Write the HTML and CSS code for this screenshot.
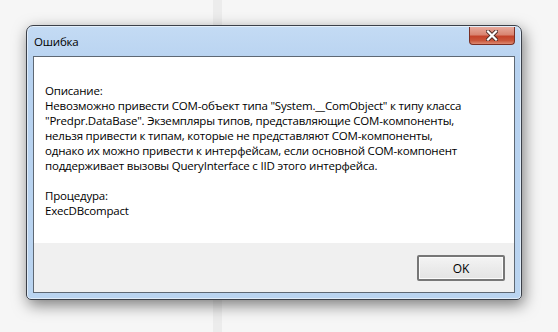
FILE: index.html
```html
<!DOCTYPE html>
<html lang="ru">
<head>
    <meta charset="UTF-8">
    <title>Ошибка</title>
    <link rel="stylesheet" href="styles.css">
</head>
<body>
    <div class="window">
        <div class="titlebar">
            <span class="title">Ошибка</span>
            <button class="close" type="button" aria-label="Закрыть">
                <svg width="12" height="11" viewBox="0 0 12 11">
                    <path d="M2 1.5 L10 9.5 M10 1.5 L2 9.5" stroke="#4a2a25" stroke-width="4" stroke-linecap="square"/>
                    <path d="M2 1.5 L10 9.5 M10 1.5 L2 9.5" stroke="#ffffff" stroke-width="2.2" stroke-linecap="square"/>
                </svg>
            </button>
        </div>
        <div class="client">
            <div class="message">
                <p>Описание:<br>
                Невозможно привести COM-объект типа "System.__ComObject" к типу класса<br>
                "Predpr.DataBase". Экземпляры типов, представляющие COM-компоненты,<br>
                нельзя привести к типам, которые не представляют COM-компоненты,<br>
                однако их можно привести к интерфейсам, если основной COM-компонент<br>
                поддерживает вызовы QueryInterface с IID этого интерфейса.</p>
                <p>Процедура:<br>
                ExecDBcompact</p>
            </div>
            <div class="footer">
                <button class="ok" type="button">OK</button>
            </div>
        </div>
    </div>
</body>
</html>
```

FILE: styles.css
```css
body {
    margin: 0;
    width: 558px;
    height: 332px;
    padding: 25px 0 0 26px;
    box-sizing: border-box;
    font-family: "Open Sans", "Noto Sans", sans-serif;
    font-size: 11.5px;
    letter-spacing: -0.2px;
    color: #000;
    background:
        linear-gradient(to right, transparent 213px, #ececec 213px, #ececec 222px, transparent 222px),
        #f6f6f6;
}
.window {
    width: 496px;
    height: 275px;
    box-sizing: border-box;
    border: 1px solid #3b4049;
    border-radius: 7px 7px 5px 5px;
    padding: 0 6px 6px 6px;
    background: linear-gradient(#c4dbf4, #b7d2f0 40px, #bad4f0);
    box-shadow: inset 0 0 0 1px rgba(255,255,255,0.55), 2px 5px 15px rgba(0,0,0,0.5);
    display: flex;
    flex-direction: column;
}
.titlebar {
    height: 30px;
    display: flex;
    justify-content: space-between;
    align-items: flex-start;
    flex-shrink: 0;
}
.title {
    padding: 8px 0 0 1px;
    line-height: 15px;
}
.close {
    margin-top: 1px;
    width: 46px;
    height: 18px;
    padding: 0;
    border: 1px solid #7a2f24;
    border-top: none;
    border-radius: 0 0 4px 4px;
    background: linear-gradient(#e7a99c 0%, #d98572 45%, #c4432b 55%, #c9563b 80%, #dd8a72 100%);
    display: flex;
    align-items: center;
    justify-content: center;
}
.client {
    flex: 1;
    border: 1px solid #5e6873;
    background: #fff;
    display: flex;
    flex-direction: column;
}
.message {
    flex: 1;
    padding: 26px 0 0 11px;
    line-height: 15px;
    white-space: nowrap;
}
.message p {
    margin: 0 0 15px 0;
}
.footer {
    height: 49px;
    box-sizing: border-box;
    background: #f0f0f0;
    display: flex;
    justify-content: flex-end;
    align-items: flex-start;
    padding: 12px 9px 0 0;
}
.ok {
    width: 88px;
    height: 26px;
    font-family: inherit;
    font-size: 12px;
    color: #000;
    border: 2px solid #777;
    border-radius: 2px;
    background: linear-gradient(#f4f4f4, #ebebeb 50%, #e4e4e4);
    box-shadow: inset 0 0 0 1px #fbfbfb;
}
```
